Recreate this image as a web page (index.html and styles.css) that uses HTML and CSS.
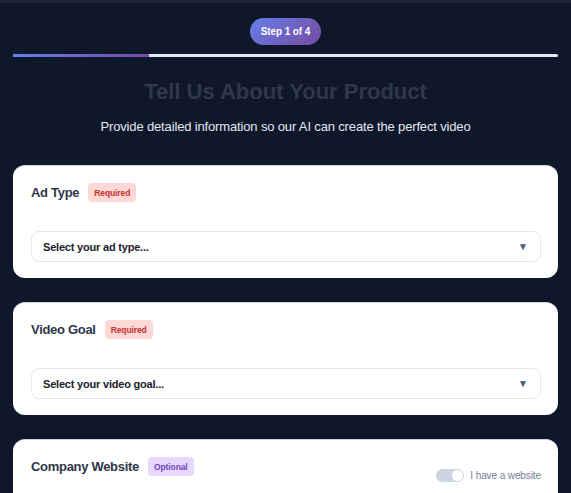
FILE: index.html
```html
<!DOCTYPE html>
<html lang="en">
<head>
<meta charset="utf-8">
<title>Tell Us About Your Product</title>
<link rel="stylesheet" href="styles.css">
</head>
<body>
<div class="topbar"></div>
<main class="wrap">
  <div class="step-row"><span class="step-pill">Step 1 of 4</span></div>
  <div class="progress"><div class="progress-fill" style="width:25%"></div></div>
  <h1 class="title">Tell Us About Your Product</h1>
  <p class="subtitle">Provide detailed information so our AI can create the perfect video</p>

  <section class="card">
    <div class="card-head">
      <h2 class="card-title">Ad Type</h2>
      <span class="badge badge-required">Required</span>
    </div>
    <div class="select">
      <span class="select-text">Select your ad type...</span>
      <span class="select-arrow">▼</span>
    </div>
  </section>

  <section class="card">
    <div class="card-head">
      <h2 class="card-title">Video Goal</h2>
      <span class="badge badge-required">Required</span>
    </div>
    <div class="select">
      <span class="select-text">Select your video goal...</span>
      <span class="select-arrow">▼</span>
    </div>
  </section>

  <section class="card">
    <div class="card-head card-head-split">
      <div class="card-head-left">
        <h2 class="card-title">Company Website</h2>
        <span class="badge badge-optional">Optional</span>
      </div>
      <label class="toggle-group">
        <span class="toggle"><span class="knob"></span></span>
        <span class="toggle-label">I have a website</span>
      </label>
    </div>
  </section>
</main>
</body>
</html>
```
FILE: styles.css
```css
* { box-sizing: border-box; }
html, body { margin: 0; padding: 0; }
body {
  background: #0f172a;
  font-family: "Liberation Sans", Arial, sans-serif;
  color: #2d3748;
  overflow: hidden;
}
.topbar { height: 3px; background: #1e2636; }
.wrap { padding: 0 13px; }
.step-row { display: flex; justify-content: center; margin-top: 15px; }
.step-pill {
  display: inline-flex; align-items: center; justify-content: center;
  width: 71px; height: 27px; border-radius: 14px;
  background: linear-gradient(135deg, #667eea, #764ba2);
  color: #fff; font-weight: bold; font-size: 10px; letter-spacing: -0.1px;
}
.progress { margin-top: 9px; height: 3px; background: #e2e8f0; border-radius: 2px; overflow: hidden; }
.progress-fill { height: 100%; background: linear-gradient(90deg, #667eea, #764ba2); }
.title {
  margin: 20px 0 0; text-align: center;
  font-size: 22px; line-height: 30px; font-weight: bold; color: #2f3849;
}
.subtitle {
  margin: 12px 0 0; text-align: center;
  font-size: 13px; line-height: 16px; letter-spacing: -0.15px; color: #e2e8f0;
}
.card {
  background: #fff; border-radius: 12px;
  border-top: 1px solid #cbd5e0;
  padding: 17px 17px 16px 18px;
  margin-top: 24px;
  min-height: 113px;
}
.subtitle + .card { margin-top: 30px; }
.card-head { display: flex; align-items: center; gap: 9px; height: 19px; }
.card-head-split { justify-content: space-between; align-items: flex-start; }
.card-head-left { display: flex; align-items: center; gap: 9px; height: 19px; }
.card-title { margin: 0; font-size: 13px; letter-spacing: -0.3px; font-weight: bold; color: #2d3748; }
.badge {
  display: inline-flex; align-items: center; height: 19px; padding: 0 6px;
  border-radius: 4px; font-size: 8.5px; font-weight: bold; letter-spacing: -0.1px;
}
.badge-required { background: #fed7d7; color: #c53030; }
.badge-optional { background: #e9d8fd; color: #6b46c1; }
.select {
  margin-top: 29px; height: 31px; border: 1px solid #e2e8f0; border-radius: 8px;
  display: flex; align-items: center; justify-content: space-between;
  padding: 0 12px 0 11px;
}
.select-text { font-size: 11px; letter-spacing: -0.2px; font-weight: bold; color: #1a202c; }
.select-arrow { font-size: 10px; color: #4a5a78; }
.toggle-group { display: flex; align-items: center; gap: 6px; margin-top: 12px; }
.toggle {
  width: 28px; height: 13px; border-radius: 7px; background: #cbd5e0;
  display: flex; align-items: center; justify-content: flex-end; padding: 1px;
}
.knob { width: 11px; height: 11px; border-radius: 50%; background: #fff; }
.toggle-label { font-size: 10px; letter-spacing: -0.1px; color: #718096; }
```
